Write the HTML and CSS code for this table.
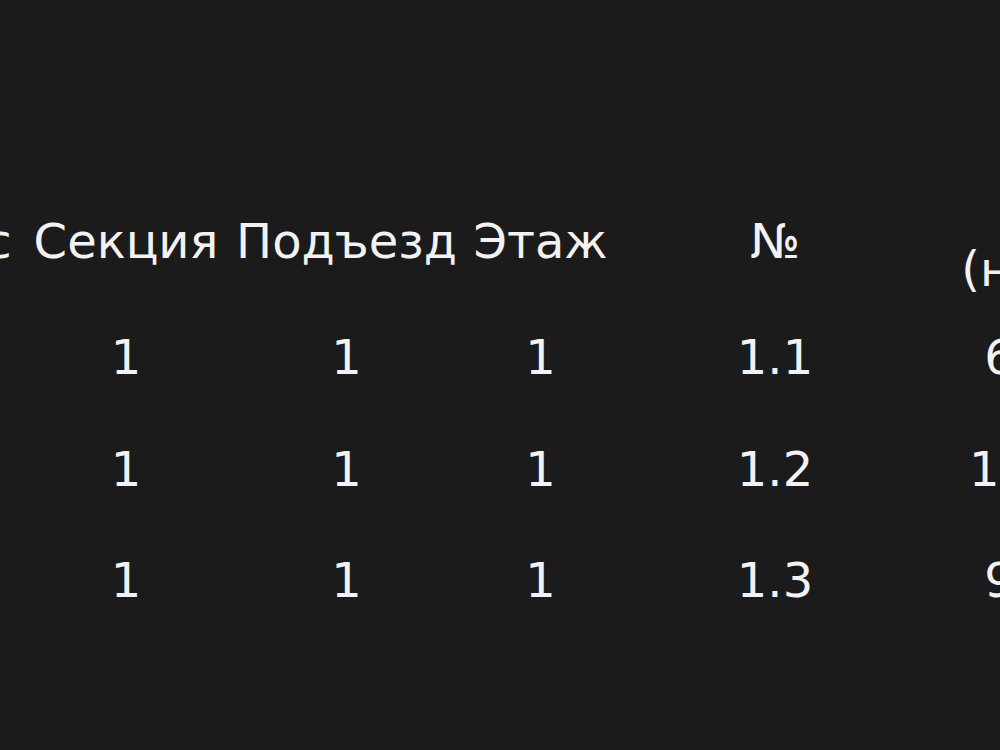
FILE: index.html
```html
<!DOCTYPE html>
<html lang="ru">
<head>
<meta charset="utf-8">
<title>Квартиры</title>
<link rel="stylesheet" href="styles.css">
</head>
<body>
<main class="view">
  <table class="flats">
    <colgroup>
      <col class="c-korpus">
      <col class="c-section">
      <col class="c-entrance">
      <col class="c-floor">
      <col class="c-num">
      <col class="c-area">
    </colgroup>
    <thead>
      <tr>
        <th>Корпус</th>
        <th>Секция</th>
        <th>Подъезд</th>
        <th>Этаж</th>
        <th>№</th>
        <th>S<br>(нетто)</th>
      </tr>
    </thead>
    <tbody>
      <tr><td>1</td><td>1</td><td>1</td><td>1</td><td>1.1</td><td>63.50</td></tr>
      <tr><td>1</td><td>1</td><td>1</td><td>1</td><td>1.2</td><td>102.30</td></tr>
      <tr><td>1</td><td>1</td><td>1</td><td>1</td><td>1.3</td><td>94.10</td></tr>
    </tbody>
  </table>
</main>
</body>
</html>
```
FILE: styles.css
```css
html, body {
  margin: 0;
  padding: 0;
  background: #1b1b1b;
  overflow: hidden;
}

.view {
  width: 1000px;
  height: 750px;
  overflow: hidden;
  padding-top: 180px;
  box-sizing: border-box;
}

.flats {
  margin-left: -181px;
  border-collapse: collapse;
  table-layout: fixed;
  width: 1353px;
  font-family: "DejaVu Sans", Verdana, sans-serif;
  font-size: 48px;
  line-height: 57px;
  color: #f2f2f2;
}

.c-korpus { width: 205px; }
.c-section { width: 204px; }
.c-entrance { width: 237px; }
.c-floor { width: 151px; }
.c-num { width: 318px; }
.c-area { width: 238px; }

.flats th {
  font-weight: normal;
  text-align: center;
  vertical-align: middle;
  padding: 4px 0;
  white-space: nowrap;
}

.flats td {
  text-align: center;
  vertical-align: middle;
  padding: 27px 0 27.5px;
  white-space: nowrap;
}
```
